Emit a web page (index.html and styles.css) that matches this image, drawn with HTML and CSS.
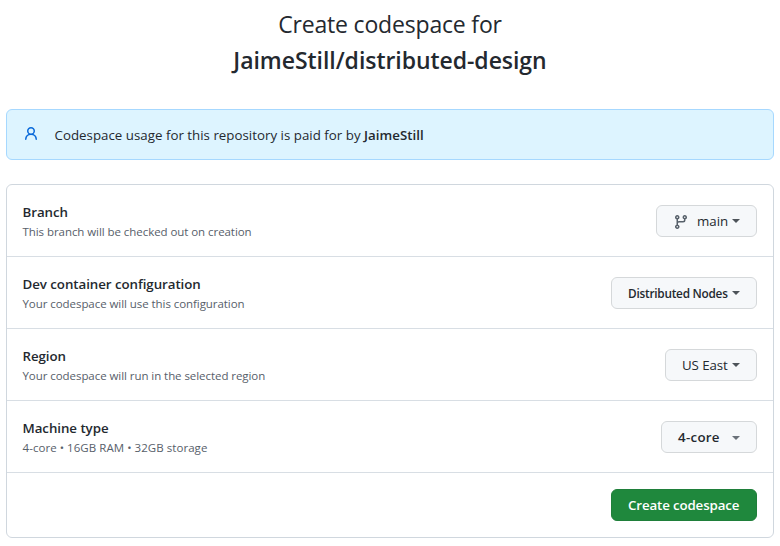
FILE: index.html
```html
<!DOCTYPE html>
<html lang="en">
<head>
<meta charset="utf-8">
<title>Create codespace</title>
<link rel="stylesheet" href="styles.css">
</head>
<body>
<main class="page">
  <h1 class="title"><span class="lead">Create codespace for</span><strong class="repo">JaimeStill/distributed-design</strong></h1>
  <div class="flash">
    <svg class="person" viewBox="0 0 16 16" width="16" height="16"><path fill-rule="evenodd" d="M10.5 5a2.5 2.5 0 11-5 0 2.5 2.5 0 015 0zm.061 3.073a4 4 0 10-5.123 0 6.004 6.004 0 00-3.431 5.142.75.75 0 001.498.07 4.5 4.5 0 018.99 0 .75.75 0 101.498-.07 6.005 6.005 0 00-3.432-5.142z"/></svg>
    <p class="flash-text">Codespace usage for this repository is paid for by <strong class="owner">JaimeStill</strong></p>
  </div>
  <form class="box">
    <div class="row">
      <div class="info"><h2 class="label">Branch</h2><p class="note">This branch will be checked out on creation</p></div>
      <button type="button" class="btn branch"><svg class="git" viewBox="0 0 16 16" width="16" height="16"><path fill-rule="evenodd" d="M11.75 2.5a.75.75 0 100 1.5.75.75 0 000-1.5zm-2.25.75a2.25 2.25 0 113 2.122V6A2.5 2.5 0 0110 8.5H6a1 1 0 00-1 1v1.128a2.251 2.251 0 11-1.5 0V5.372a2.25 2.25 0 111.5 0v1.836A2.492 2.492 0 016 7h4a1 1 0 001-1v-.628A2.25 2.25 0 019.5 3.25zM4.25 12a.75.75 0 100 1.5.75.75 0 000-1.5zM3.5 3.25a.75.75 0 111.5 0 .75.75 0 01-1.5 0z"/></svg><span>main</span><i class="caret"></i></button>
    </div>
    <div class="row">
      <div class="info"><h2 class="label">Dev container configuration</h2><p class="note">Your codespace will use this configuration</p></div>
      <button type="button" class="btn config"><span>Distributed Nodes</span><i class="caret"></i></button>
    </div>
    <div class="row">
      <div class="info"><h2 class="label">Region</h2><p class="note">Your codespace will run in the selected region</p></div>
      <button type="button" class="btn region"><span>US East</span><i class="caret"></i></button>
    </div>
    <div class="row">
      <div class="info"><h2 class="label">Machine type</h2><p class="note specs">4-core • 16GB RAM • 32GB storage</p></div>
      <button type="button" class="btn machine"><span>4-core</span><i class="caret"></i></button>
    </div>
    <div class="row submit">
      <button type="button" class="btn primary"><span>Create codespace</span></button>
    </div>
  </form>
</main>
</body>
</html>
```
FILE: styles.css
```css
* { box-sizing: border-box; }
body {
  margin: 0;
  background: #fff;
  color: #24292f;
  font: 13.3px/20px "Open Sans", "Noto Sans", sans-serif;
}
h1, h2, p { margin: 0; }
.page { padding: 6px 6px 0; }
.title {
  height: 73px;
  font-size: 23px;
  font-weight: 400;
  line-height: 36px;
  text-align: center;
}
.title .lead, .title .repo { display: block; }
.lead { letter-spacing: -0.18px; }
.repo, .owner { font-weight: 600; }
.repo { letter-spacing: -0.05px; }
.flash {
  display: flex;
  align-items: center;
  height: 51px;
  margin-top: 30px;
  padding: 0 16px;
  border: 1px solid #a6d8ff;
  border-radius: 6px;
  background: #ddf4ff;
}
.flash-text { letter-spacing: 0.015px; }
.person { margin: -1px 15.5px 0 0; fill: #0969da; }
.box {
  margin-top: 24px;
  border: 1px solid #d0d7de;
  border-radius: 6px;
}
.row {
  display: flex;
  align-items: center;
  justify-content: space-between;
  height: 72px;
  padding: 0 16px 0 15.5px;
  border-bottom: 1px solid #d8dee4;
}
.row.submit { height: 64px; border-bottom: 0; justify-content: flex-end; }
.label { font-size: 13.3px; font-weight: 600; line-height: 20px; letter-spacing: -0.05px; }
.note { margin: 1px 0 -1px; font-size: 11.5px; line-height: 18px; letter-spacing: -0.06px; color: #57606a; }
.specs { letter-spacing: 0.05px; }
.btn {
  display: flex;
  align-items: center;
  height: 32px;
  padding: 0 16px;
  border: 1px solid #d5d8da;
  border-radius: 6px;
  background: #f6f8fa;
  color: #24292f;
  font: 13.3px/20px "Open Sans", "Noto Sans", sans-serif;
  white-space: nowrap;
}
.git { margin: 2px 8px 0 0; fill: #57606a; }
.caret {
  flex: none;
  width: 8px;
  margin-left: auto;
  border: 4px solid transparent;
  border-top-color: #4d5359;
  border-bottom: 0;
}
.branch { width: 101px; }
.config { width: 146px; font-size: 11.8px; font-weight: 600; letter-spacing: -0.24px; }
.region { width: 92px; }
.region span { letter-spacing: -0.1px; }
.machine { width: 96px; font-weight: 600; letter-spacing: 0.3px; }
.machine .caret { margin-top: 3px; border-top-color: #6a7179; }
.primary {
  width: 146px;
  border-color: #1f7f3a;
  background: #1f883d;
  color: #fff;
  font-weight: 600;
  letter-spacing: -0.13px;
}
```
